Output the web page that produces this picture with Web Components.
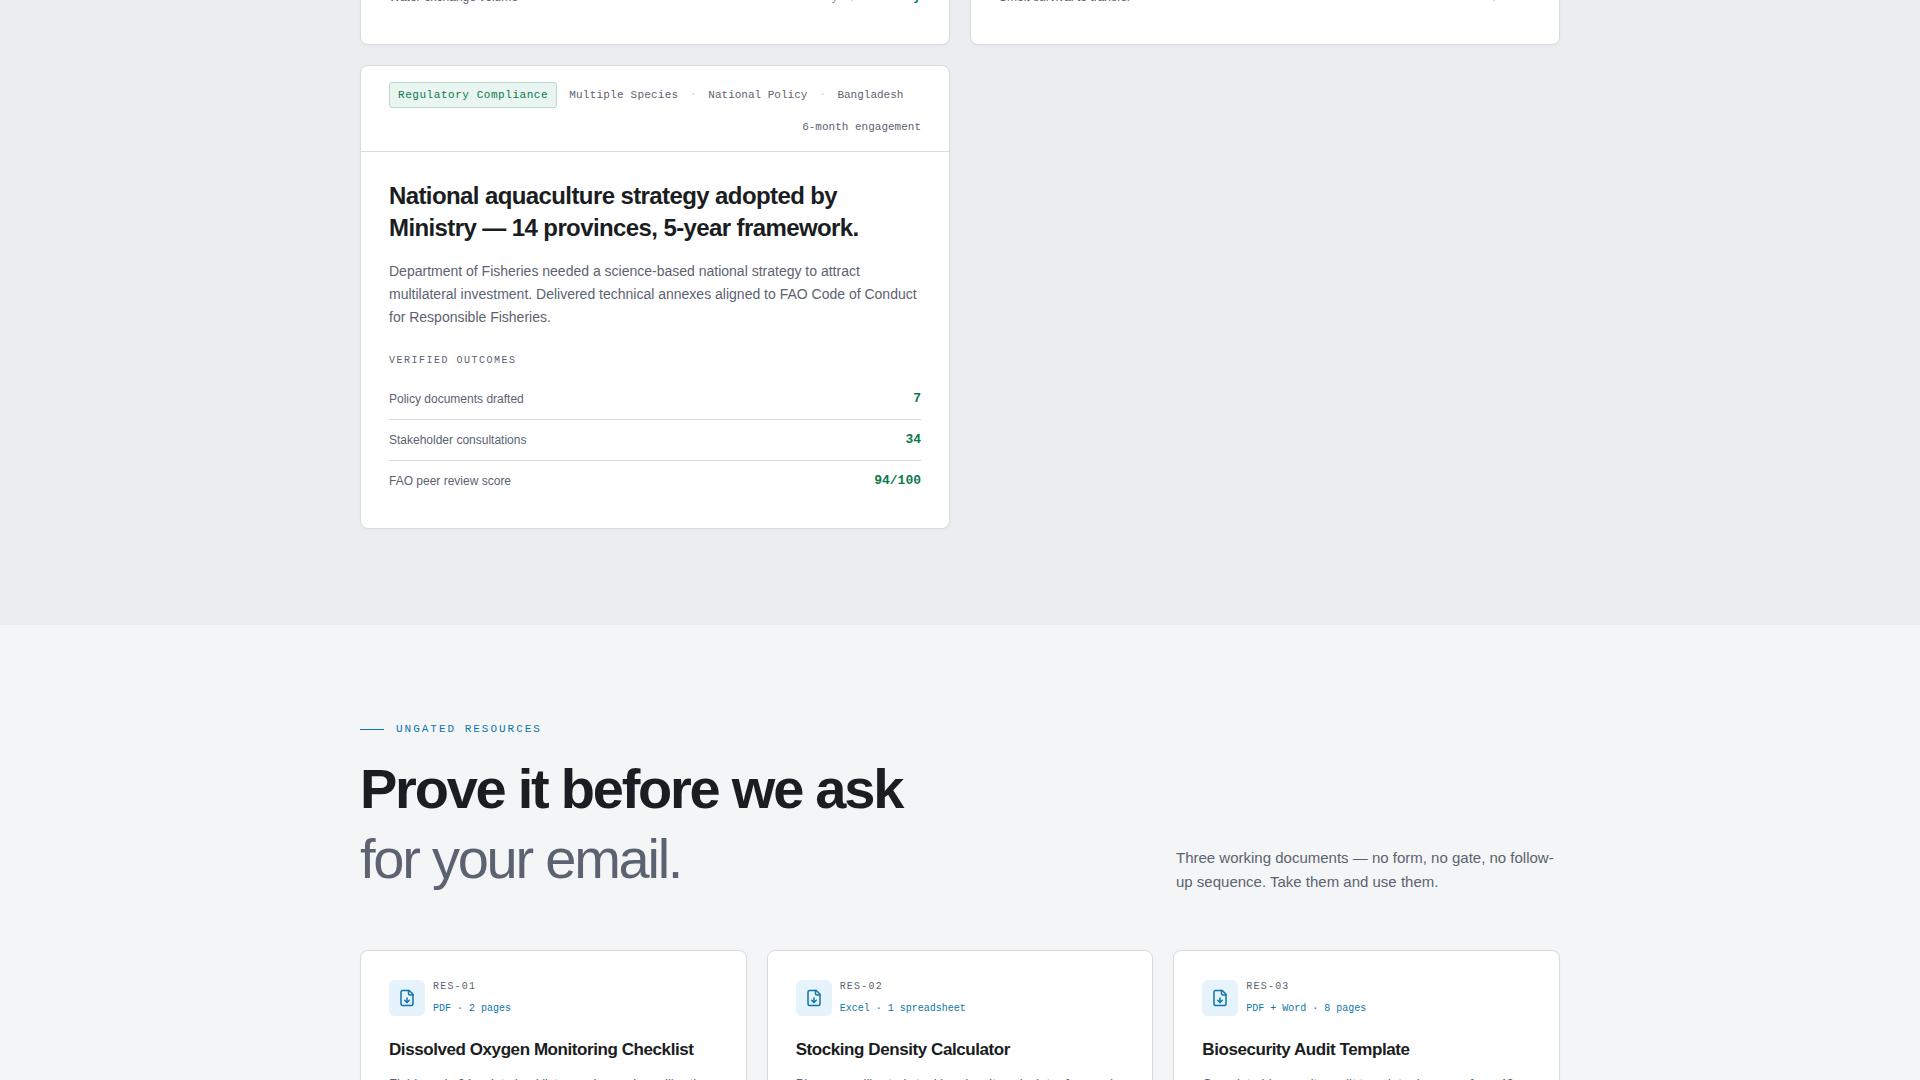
<!DOCTYPE html>
<html lang="en">
<head>
<meta charset="utf-8">
<meta name="viewport" content="width=device-width, initial-scale=1">
<title>Aquaculture Advisory</title>
<style>
  :root {
    --ink: #1a1d21;
    --muted: #5c6370;
    --line: #d8dcdf;
    --blue: #0e76a8;
    --green: #0a7a4a;
    --mono: "Liberation Mono", monospace;
  }

  html {
    overflow-x: hidden;
  }

  body {
    margin: 0;
    background: #f4f5f7;
    color: var(--ink);
    font-family: "Liberation Sans", sans-serif;
    -webkit-font-smoothing: antialiased;
  }
</style>
</head>
<body>
<page-section tone="dim" flush>
  <card-grid columns="2">
    <case-card>
      <outcome-row slot="outcomes" label="Water exchange volume" before="40%/day" value="12%/day"></outcome-row>
    </case-card>
    <case-card>
      <outcome-row slot="outcomes" label="Smolt survival to transfer" before="71%" value="94%"></outcome-row>
    </case-card>
    <case-card tag="Regulatory Compliance" species="Multiple Species" system="National Policy" country="Bangladesh" duration="6-month engagement">
      <span slot="title">National aquaculture strategy adopted by Ministry — 14 provinces, 5-year framework.</span>
      <span slot="summary">Department of Fisheries needed a science-based national strategy to attract multilateral investment. Delivered technical annexes aligned to FAO Code of Conduct for Responsible Fisheries.</span>
      <outcome-row slot="outcomes" label="Policy documents drafted" value="7"></outcome-row>
      <outcome-row slot="outcomes" label="Stakeholder consultations" value="34"></outcome-row>
      <outcome-row slot="outcomes" label="FAO peer review score" value="94/100"></outcome-row>
    </case-card>
  </card-grid>
</page-section>

<page-section>
  <section-heading eyebrow="Ungated Resources">
    <span slot="title">Prove it before we ask</span>
    <span slot="subtitle">for your email.</span>
    <span slot="intro">Three working documents — no form, no gate, no follow-up sequence. Take them and use them.</span>
  </section-heading>
  <card-grid columns="3">
    <resource-card code="RES-01" format="PDF · 2 pages" heading="Dissolved Oxygen Monitoring Checklist">Field-ready 24-point checklist covering probe calibration, sampling depth and alarm thresholds.</resource-card>
    <resource-card code="RES-02" format="Excel · 1 spreadsheet" heading="Stocking Density Calculator">Biomass-calibrated stocking density calculator for pond and tank systems.</resource-card>
    <resource-card code="RES-03" format="PDF + Word · 8 pages" heading="Biosecurity Audit Template">Complete biosecurity audit template drawn up from 42 farm site inspections.</resource-card>
  </card-grid>
</page-section>

<script>
class PageSection extends HTMLElement {
  constructor() {
    super();
    this.attachShadow({ mode: 'open' });
  }

  connectedCallback() {
    this.shadowRoot.innerHTML = `
      <style>
        :host {
          display: block;
          padding: 96px 24px;
          overflow: hidden;
        }

        :host([tone="dim"]) {
          background: #ecedf1;
        }

        :host([flush]) {
          padding-top: 0;
        }

        .container {
          max-width: 1200px;
          margin: 0 auto;
        }

        :host([flush]) .container {
          margin-top: -52px;
        }
      </style>
      <section class="container"><slot></slot></section>
    `;
  }
}

class CardGrid extends HTMLElement {
  constructor() {
    super();
    this.attachShadow({ mode: 'open' });
  }

  connectedCallback() {
    this.shadowRoot.innerHTML = `
      <style>
        :host {
          display: grid;
          grid-template-columns: repeat(${this.getAttribute('columns')}, minmax(0, 1fr));
          gap: 20px;
        }
      </style>
      <slot></slot>
    `;
  }
}

class OutcomeRow extends HTMLElement {
  constructor() {
    super();
    this.attachShadow({ mode: 'open' });
  }

  connectedCallback() {
    const before = this.getAttribute('before');

    this.shadowRoot.innerHTML = `
      <style>
        :host {
          display: flex;
          align-items: center;
          justify-content: space-between;
          padding: 10px 0;
          border-bottom: 1px solid var(--line);
          line-height: 20px;
        }

        :host(:last-of-type) {
          border-bottom: 0;
        }

        .label {
          color: var(--muted);
          font-size: 12px;
        }

        .result {
          display: flex;
          align-items: center;
          gap: 8px;
          font-family: var(--mono);
        }

        .before {
          color: #8b909c;
          font-size: 12px;
        }

        .value {
          color: var(--green);
          font-size: 13px;
          font-weight: 700;
        }

        svg {
          width: 12px;
          height: 12px;
          color: #8b909c;
        }
      </style>
      <span class="label">${this.getAttribute('label')}</span>
      <span class="result">
        ${before ? `
          <span class="before">${before}</span>
          <svg viewBox="0 0 24 24" fill="none" stroke="currentColor" stroke-width="2" stroke-linecap="round" stroke-linejoin="round" aria-hidden="true">
            <path d="M5 12h14M12 5l7 7-7 7"/>
          </svg>
        ` : ''}
        <span class="value">${this.getAttribute('value')}</span>
      </span>
    `;
  }
}

class CaseCard extends HTMLElement {
  constructor() {
    super();
    this.attachShadow({ mode: 'open' });
  }

  renderHeader() {
    return `
      <header>
        <span class="tag">${this.getAttribute('tag')}</span>
        <span class="species">${this.getAttribute('species')}</span>
        <span class="dot">·</span>
        <span>${this.getAttribute('system')}</span>
        <span class="dot">·</span>
        <span>${this.getAttribute('country')}</span>
        <span class="duration">${this.getAttribute('duration')}</span>
      </header>
    `;
  }

  renderIntro() {
    return `
      <h3><slot name="title"></slot></h3>
      <p class="summary"><slot name="summary"></slot></p>
      <p class="caption">Verified outcomes</p>
    `;
  }

  connectedCallback() {
    const full = this.hasAttribute('tag');

    this.shadowRoot.innerHTML = `
      <style>
        :host {
          display: block;
          background: #fff;
          border: 1px solid var(--line);
          border-radius: 8px;
          box-shadow: 0 1px 3px rgba(20, 25, 40, 0.03);
        }

        header {
          display: flex;
          flex-wrap: wrap;
          align-items: center;
          gap: 10px 12px;
          padding: 16px 28px 15px;
          border-bottom: 1px solid var(--line);
          color: var(--muted);
          font-family: var(--mono);
          font-size: 11px;
          line-height: 18px;
        }

        .tag {
          padding: 3px 8px;
          background: #e9f5f0;
          border: 1px solid #bbd9cb;
          border-radius: 3px;
          color: var(--green);
          letter-spacing: 0.05em;
        }

        .species {
          letter-spacing: 0.02em;
        }

        .dot {
          color: #c3c7ce;
          font-size: 10px;
        }

        .duration {
          margin-left: auto;
        }

        .body {
          padding: 28px 28px 27px;
        }

        h3 {
          margin: 0 0 16px;
          font-size: 24px;
          font-weight: 700;
          line-height: 32px;
          letter-spacing: -0.025em;
        }

        p {
          margin: 0;
          color: var(--muted);
        }

        .summary {
          margin-bottom: 24px;
          font-size: 14px;
          line-height: 23px;
        }

        .caption {
          margin-bottom: 10px;
          font-family: var(--mono);
          font-size: 10px;
          line-height: 16px;
          letter-spacing: 0.15em;
          text-transform: uppercase;
        }
      </style>
      ${full ? this.renderHeader() : ''}
      <div class="body">
        ${full ? this.renderIntro() : ''}
        <slot name="outcomes"></slot>
      </div>
    `;
  }
}

class SectionHeading extends HTMLElement {
  constructor() {
    super();
    this.attachShadow({ mode: 'open' });
  }

  connectedCallback() {
    this.shadowRoot.innerHTML = `
      <style>
        :host {
          display: block;
          margin-bottom: 56px;
        }

        .eyebrow {
          display: flex;
          align-items: center;
          gap: 12px;
          margin: 0 0 16px;
          color: var(--blue);
          font-family: var(--mono);
          font-size: 11px;
          line-height: 17px;
          letter-spacing: 0.18em;
          text-transform: uppercase;
        }

        .eyebrow::before {
          content: "";
          width: 24px;
          height: 1px;
          background: currentColor;
        }

        .row {
          display: flex;
          align-items: flex-end;
          justify-content: space-between;
          gap: 48px;
        }

        h2 {
          margin: 0;
          font-size: 56px;
          font-weight: 700;
          line-height: 70px;
          letter-spacing: -0.04em;
        }

        .subtitle {
          display: block;
          color: var(--muted);
          font-weight: 400;
        }

        .intro {
          max-width: 384px;
          margin: 0;
          color: var(--muted);
          font-size: 15px;
          line-height: 24px;
        }
      </style>
      <p class="eyebrow">${this.getAttribute('eyebrow')}</p>
      <div class="row">
        <h2>
          <slot name="title"></slot>
          <span class="subtitle"><slot name="subtitle"></slot></span>
        </h2>
        <p class="intro"><slot name="intro"></slot></p>
      </div>
    `;
  }
}

class ResourceCard extends HTMLElement {
  constructor() {
    super();
    this.attachShadow({ mode: 'open' });
  }

  connectedCallback() {
    this.shadowRoot.innerHTML = `
      <style>
        :host {
          display: block;
          padding: 28px;
          background: #fff;
          border: 1px solid var(--line);
          border-radius: 8px;
          box-shadow: 0 1px 3px rgba(20, 25, 40, 0.03);
        }

        .top {
          display: flex;
          align-items: center;
          gap: 8px;
          margin-bottom: 20px;
        }

        .icon {
          display: grid;
          place-items: center;
          width: 36px;
          height: 36px;
          background: #e6f2fc;
          border-radius: 6px;
          color: var(--blue);
        }

        .icon svg {
          width: 18px;
          height: 18px;
        }

        .meta {
          display: grid;
          gap: 6px;
          font-family: var(--mono);
          font-size: 10px;
          line-height: 16px;
        }

        .code {
          color: var(--muted);
          letter-spacing: 0.12em;
        }

        .format {
          color: var(--blue);
        }

        h3 {
          margin: 0 0 10px;
          font-size: 17px;
          font-weight: 700;
          line-height: 26px;
          letter-spacing: -0.025em;
        }

        p {
          margin: 0;
          color: var(--muted);
          font-size: 13px;
          line-height: 21px;
        }
      </style>
      <div class="top">
        <span class="icon">
          <svg viewBox="0 0 24 24" fill="none" stroke="currentColor" stroke-width="2" stroke-linecap="round" stroke-linejoin="round" aria-hidden="true">
            <path d="M15 2H6a2 2 0 0 0-2 2v16a2 2 0 0 0 2 2h12a2 2 0 0 0 2-2V7z"/>
            <path d="M14 2v4a2 2 0 0 0 2 2h4"/>
            <path d="M12 18v-6"/>
            <path d="m9 15 3 3 3-3"/>
          </svg>
        </span>
        <div class="meta">
          <span class="code">${this.getAttribute('code')}</span>
          <span class="format">${this.getAttribute('format')}</span>
        </div>
      </div>
      <h3>${this.getAttribute('heading')}</h3>
      <p><slot></slot></p>
    `;
  }
}

customElements.define('page-section', PageSection);
customElements.define('card-grid', CardGrid);
customElements.define('outcome-row', OutcomeRow);
customElements.define('case-card', CaseCard);
customElements.define('section-heading', SectionHeading);
customElements.define('resource-card', ResourceCard);
</script>
</body>
</html>
